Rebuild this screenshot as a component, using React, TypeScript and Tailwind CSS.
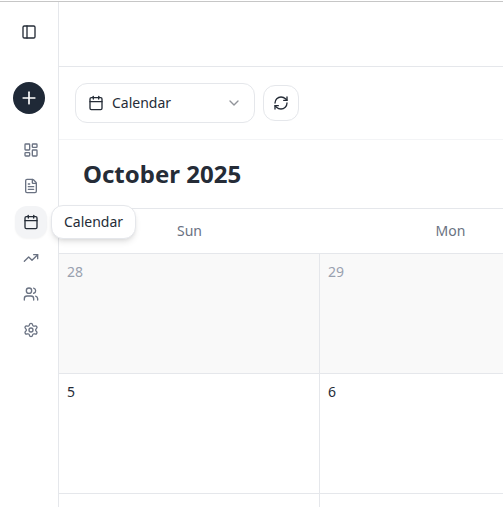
import {
  Calendar,
  ChevronDown,
  FileText,
  LayoutDashboard,
  PanelLeft,
  Plus,
  RefreshCw,
  Settings,
  TrendingUp,
  Users,
} from "lucide-react";

const navItems = [
  { label: "Dashboard", icon: LayoutDashboard },
  { label: "Documents", icon: FileText },
  { label: "Calendar", icon: Calendar, active: true },
  { label: "Analytics", icon: TrendingUp },
  { label: "Team", icon: Users },
  { label: "Settings", icon: Settings },
];

const weekdays = ["Sun", "Mon"];

const weeks = [
  { outside: true, days: [28, 29] },
  { outside: false, days: [5, 6] },
];

function Sidebar() {
  return (
    <aside className="flex w-[59px] shrink-0 flex-col items-center border-r border-gray-200 pt-[14px]">
      <button
        aria-label="Toggle sidebar"
        className="flex size-8 items-center justify-center rounded-lg"
      >
        <PanelLeft size={16} />
      </button>
      <button
        aria-label="Create"
        className="mt-[34px] flex size-8 items-center justify-center rounded-full bg-[#1f2937] text-white"
      >
        <Plus size={20} strokeWidth={2} />
      </button>
      <nav className="mt-5 flex flex-col gap-1 pl-1">
        {navItems.map(({ label, icon: Icon, active }) => (
          <a
            key={label}
            href="#"
            aria-label={label}
            className={
              active
                ? "relative flex size-8 items-center justify-center rounded-xl bg-gray-100 text-[#252c37] shadow-xs"
                : "flex size-8 items-center justify-center rounded-xl text-gray-500"
            }
          >
            <Icon size={16} />
            {active && (
              <span
                role="tooltip"
                className="absolute top-1/2 left-full z-10 ml-1 -translate-y-1/2 rounded-xl border border-gray-200 bg-white px-3 py-1.5 text-sm shadow-md"
              >
                {label}
              </span>
            )}
          </a>
        ))}
      </nav>
    </aside>
  );
}

function Toolbar() {
  return (
    <div className="flex items-center gap-2 border-b border-gray-100 p-4">
      <div className="relative flex w-[180px] items-center">
        <Calendar
          size={16}
          className="pointer-events-none absolute left-[13px]"
        />
        <select
          aria-label="View"
          className="h-10 w-full appearance-none rounded-xl border border-gray-200 bg-white pr-8 pl-9 text-sm"
        >
          <option>Calendar</option>
        </select>
        <ChevronDown
          size={16}
          className="pointer-events-none absolute right-[13px] opacity-50"
        />
      </div>
      <button
        aria-label="Refresh"
        className="flex size-9 items-center justify-center rounded-xl border border-gray-200"
      >
        <RefreshCw size={16} />
      </button>
    </div>
  );
}

function MonthGrid() {
  return (
    <table className="w-[522px] table-fixed border-separate border-spacing-0 text-sm">
      <thead>
        <tr>
          {weekdays.map((day) => (
            <th
              key={day}
              className="h-[45px] border-b border-gray-200 p-0 text-center font-normal text-gray-500"
            >
              {day}
            </th>
          ))}
        </tr>
      </thead>
      <tbody>
        {weeks.map(({ outside, days }) => (
          <tr key={days[0]}>
            {days.map((day) => (
              <td
                key={day}
                className={
                  outside
                    ? "h-[120px] border-r border-b border-gray-200 bg-[#f9f9f9] p-2 align-top text-gray-400"
                    : "h-[120px] border-r border-b border-gray-200 p-2 align-top"
                }
              >
                {day}
              </td>
            ))}
          </tr>
        ))}
        <tr>
          {weekdays.map((day) => (
            <td key={day} className="h-[120px] border-r border-gray-200" />
          ))}
        </tr>
      </tbody>
    </table>
  );
}

export default function App() {
  return (
    <div className="h-screen overflow-hidden bg-white pt-px font-['Noto_Sans',sans-serif] text-[#252c37]">
      <div className="flex h-full border-t border-[#c6c6c6]">
        <Sidebar />
        <main className="min-w-0 flex-1 overflow-hidden">
          <header className="h-[65px] border-b border-gray-200" />
          <Toolbar />
          <div className="border-b border-gray-200 px-6 py-4">
            <h1 className="text-2xl leading-9 font-bold">October 2025</h1>
          </div>
          <MonthGrid />
        </main>
      </div>
    </div>
  );
}
